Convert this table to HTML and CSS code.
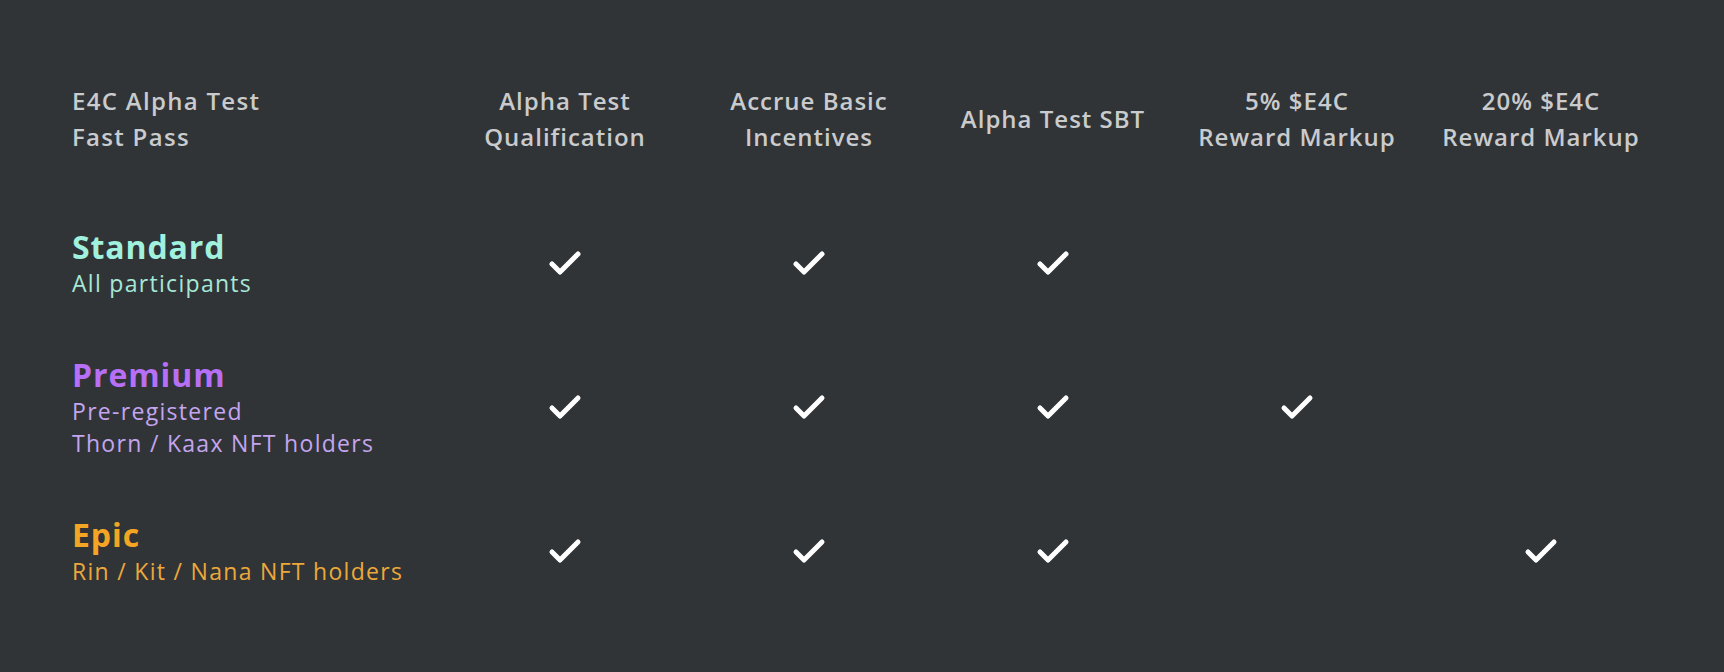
FILE: index.html
```html
<!DOCTYPE html>
<html lang="en">
<head>
<meta charset="utf-8">
<title>E4C Alpha Test Fast Pass</title>
<link rel="stylesheet" href="styles.css">
</head>
<body>
<main class="table">
  <div class="cell head head-left">E4C Alpha Test<br>Fast Pass</div>
  <div class="cell head">Alpha Test<br>Qualification</div>
  <div class="cell head">Accrue Basic<br>Incentives</div>
  <div class="cell head">Alpha Test SBT</div>
  <div class="cell head">5% $E4C<br>Reward Markup</div>
  <div class="cell head">20% $E4C<br>Reward Markup</div>

  <div class="cell tier standard">
    <div class="tier-name">Standard</div>
    <div class="tier-desc">All participants</div>
  </div>
  <div class="cell mark"><svg class="check" viewBox="0 0 36 28"><path d="M5 15 L13 23 L31 5"/></svg></div>
  <div class="cell mark"><svg class="check" viewBox="0 0 36 28"><path d="M5 15 L13 23 L31 5"/></svg></div>
  <div class="cell mark"><svg class="check" viewBox="0 0 36 28"><path d="M5 15 L13 23 L31 5"/></svg></div>
  <div class="cell mark"></div>
  <div class="cell mark"></div>

  <div class="cell tier premium">
    <div class="tier-name">Premium</div>
    <div class="tier-desc">Pre-registered<br>Thorn / Kaax NFT holders</div>
  </div>
  <div class="cell mark"><svg class="check" viewBox="0 0 36 28"><path d="M5 15 L13 23 L31 5"/></svg></div>
  <div class="cell mark"><svg class="check" viewBox="0 0 36 28"><path d="M5 15 L13 23 L31 5"/></svg></div>
  <div class="cell mark"><svg class="check" viewBox="0 0 36 28"><path d="M5 15 L13 23 L31 5"/></svg></div>
  <div class="cell mark"><svg class="check" viewBox="0 0 36 28"><path d="M5 15 L13 23 L31 5"/></svg></div>
  <div class="cell mark"></div>

  <div class="cell tier epic">
    <div class="tier-name">Epic</div>
    <div class="tier-desc">Rin / Kit / Nana NFT holders</div>
  </div>
  <div class="cell mark"><svg class="check" viewBox="0 0 36 28"><path d="M5 15 L13 23 L31 5"/></svg></div>
  <div class="cell mark"><svg class="check" viewBox="0 0 36 28"><path d="M5 15 L13 23 L31 5"/></svg></div>
  <div class="cell mark"><svg class="check" viewBox="0 0 36 28"><path d="M5 15 L13 23 L31 5"/></svg></div>
  <div class="cell mark"></div>
  <div class="cell mark"><svg class="check" viewBox="0 0 36 28"><path d="M5 15 L13 23 L31 5"/></svg></div>
</main>
</body>
</html>
```
FILE: styles.css
```css
html, body {
  margin: 0;
  padding: 0;
  background: #313437;
}
body {
  width: 1724px;
  height: 672px;
  overflow: hidden;
  font-family: "Open Sans", "Noto Sans", sans-serif;
}
.table {
  display: grid;
  grid-template-columns: 371px repeat(5, 244px);
  grid-auto-rows: 144px;
  padding: 47px 0 0 72px;
}
.cell {
  display: flex;
  flex-direction: column;
  justify-content: center;
}
.head {
  align-items: center;
  text-align: center;
  color: #c9cbcd;
  font-weight: 600;
  font-size: 24px;
  line-height: 36px;
  letter-spacing: 1px;
}
.head-left {
  align-items: flex-start;
  text-align: left;
  letter-spacing: 1.3px;
}
.tier-name {
  font-weight: 700;
  font-size: 32px;
  line-height: 40px;
  letter-spacing: 0.9px;
}
.tier-desc {
  font-size: 23px;
  line-height: 32px;
  letter-spacing: 1.3px;
}
.standard .tier-name { color: #a0f1dd; }
.standard .tier-desc { color: #a6e8d8; }
.premium .tier-name { color: #b66ff5; }
.premium .tier-desc { color: #c4a5ef; }
.epic .tier-name { color: #f5a524; }
.epic .tier-desc { color: #eca83a; }
.mark {
  align-items: center;
}
.check {
  width: 36px;
  height: 28px;
  fill: none;
  stroke: #ffffff;
  stroke-width: 5;
  stroke-linecap: round;
  stroke-linejoin: round;
}
```
